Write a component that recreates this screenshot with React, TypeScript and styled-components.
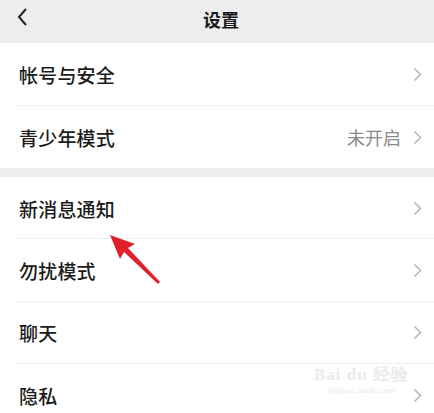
import React from "react";
import styled, { createGlobalStyle } from "styled-components";

const Global = createGlobalStyle`
  html, body { margin: 0; padding: 0; background: #ededed; }
  body { font-family: "Noto Sans CJK SC", "Noto Sans", sans-serif; }
`;

const Page = styled.div`
  position: relative;
  width: 434px;
  height: 413px;
  overflow: hidden;
  background: #ededed;
  display: flex;
  flex-direction: column;
`;

const Header = styled.div`
  height: 43px;
  flex: none;
  display: flex;
  align-items: center;
  justify-content: center;
  position: relative;
  background: #ededed;
`;

const Title = styled.div`
  font-size: 18px;
  font-weight: 600;
  color: #1a1a1a;
  padding-left: 8px;
  margin-top: -6px;
`;

const Back = styled.div`
  position: absolute;
  left: 14px;
  top: 6px;
  width: 18px;
  height: 22px;
  display: flex;
`;

const Group = styled.div`
  background: #fff;
  display: flex;
  flex-direction: column;
  flex: none;
`;

const Gap = styled.div`
  height: 9px;
  flex: none;
`;

const Row = styled.div<{ $h: number; $divider: boolean }>`
  height: ${(p) => p.$h}px;
  display: flex;
  align-items: center;
  padding: 0 12px 0 19px;
  position: relative;
  &::after {
    content: "";
    display: ${(p) => (p.$divider ? "block" : "none")};
    position: absolute;
    left: 17px;
    right: 0;
    bottom: 0;
    height: 1px;
    background: #f0f0f0;
  }
`;

const Label = styled.div`
  flex: 1;
  font-size: 19px;
  font-weight: 500;
  color: #1c1c1c;
  letter-spacing: 0.2px;
`;

const Value = styled.div`
  font-size: 18px;
  color: #8a8a8a;
  margin-right: 12px;
`;

const Chevron = () => (
  <svg width="9" height="15" viewBox="0 0 9 15">
    <path d="M1.5 1.5 L7.5 7.5 L1.5 13.5" fill="none" stroke="#b8b8b8" strokeWidth="1.6" />
  </svg>
);

const Watermark = styled.div`
  position: absolute;
  left: 314px;
  top: 366px;
  display: flex;
  flex-direction: column;
  align-items: center;
  color: #ebebeb;
  font-family: "Liberation Serif", serif;
  pointer-events: none;
`;

const WmTop = styled.div`
  font-size: 17px;
  font-weight: 700;
  letter-spacing: 1px;
  line-height: 18px;
`;

const WmUrl = styled.div`
  font-size: 9px;
  line-height: 12px;
`;

const Arrow = styled.svg`
  position: absolute;
  left: 105px;
  top: 228px;
`;

type Item = { label: string; value?: string };

const group1: Item[] = [{ label: "帐号与安全" }, { label: "青少年模式", value: "未开启" }];
const group2: Item[] = [{ label: "新消息通知" }, { label: "勿扰模式" }, { label: "聊天" }, { label: "隐私" }];

export default function App() {
  return (
    <Page>
      <Global />
      <Header>
        <Back>
          <svg width="18" height="22" viewBox="0 0 18 22">
            <path d="M12 3 L5 11 L12 19" fill="none" stroke="#222" strokeWidth="2" />
          </svg>
        </Back>
        <Title>设置</Title>
      </Header>
      <Group>
        {group1.map((it, i) => (
          <Row key={it.label} $h={i === 0 ? 63 : 62} $divider={i < group1.length - 1}>
            <Label>{it.label}</Label>
            {it.value && <Value>{it.value}</Value>}
            <Chevron />
          </Row>
        ))}
      </Group>
      <Gap />
      <Group>
        {group2.map((it, i) => (
          <Row key={it.label} $h={i === 0 ? 62 : 62.5} $divider={i < group2.length - 1}>
            <Label>{it.label}</Label>
            <Chevron />
          </Row>
        ))}
      </Group>
      <Watermark>
        <WmTop>Bai du 经验</WmTop>
        <WmUrl>jingyan.baidu.com</WmUrl>
      </Watermark>
      <Arrow width="60" height="60" viewBox="0 0 60 60">
        <path d="M5 7 L30 16 L23 20 L55 54 L53 56 L19 24 L15 31 Z" fill="#e0202a" />
      </Arrow>
    </Page>
  );
}
